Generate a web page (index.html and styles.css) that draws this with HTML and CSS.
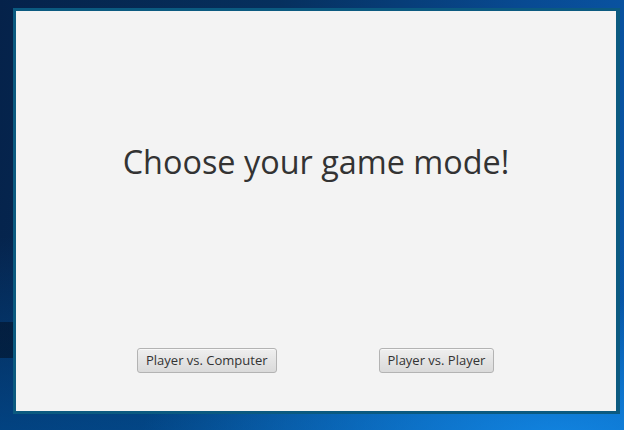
FILE: index.html
```html
<!DOCTYPE html>
<html lang="en">
<head>
<meta charset="utf-8">
<title>Game mode</title>
<link rel="stylesheet" href="styles.css">
</head>
<body>
  <div class="window">
    <div class="content">
      <h1 class="title">Choose your game mode!</h1>
      <div class="actions">
        <button class="btn">Player vs. Computer</button>
        <button class="btn">Player vs. Player</button>
      </div>
    </div>
  </div>
</body>
</html>
```

FILE: styles.css
```css
html, body {
  margin: 0;
  height: 100%;
}

body {
  width: 624px;
  height: 430px;
  box-sizing: border-box;
  padding: 8px 4px 16px 13px;
  overflow: hidden;
  background:
    linear-gradient(to bottom, transparent 322px, rgba(2, 18, 40, 0.6) 322px, rgba(2, 18, 40, 0.6) 358px, transparent 358px) 0 0 / 13px 100% no-repeat,
    radial-gradient(ellipse 420px 140px at 560px 440px, rgba(20, 140, 235, 0.85), rgba(20, 140, 235, 0) 100%),
    linear-gradient(to bottom, rgba(0, 0, 0, 0) 55%, rgba(0, 90, 170, 0.55) 100%),
    linear-gradient(100deg, #05224a 0%, #06305e 40%, #084a92 75%, #0a58aa 100%);
  font-family: "Open Sans", "Noto Sans", sans-serif;
}

.window {
  width: 600px;
  height: 400px;
  border: 3px solid #0b5a80;
  border-right-width: 4px;
}

.content {
  height: 100%;
  background: #f3f3f3;
  display: flex;
  flex-direction: column;
}

.title {
  margin: 0;
  padding-top: 128px;
  text-align: center;
  font-size: 32.4px;
  font-weight: 400;
  line-height: 44px;
  color: #333333;
}

.actions {
  display: flex;
  gap: 102px;
  padding-left: 121px;
  margin-top: 165px;
}

.btn {
  height: 25px;
  padding: 0 8px;
  border: 1px solid #b3b3b3;
  border-radius: 3px;
  background: linear-gradient(to bottom, #efefef 0%, #e4e4e4 50%, #dadada 100%);
  box-shadow: inset 0 1px 0 #f8f8f8;
  font-family: "Open Sans", "Noto Sans", sans-serif;
  font-size: 13px;
  color: #333333;
  line-height: 23px;
}
```
